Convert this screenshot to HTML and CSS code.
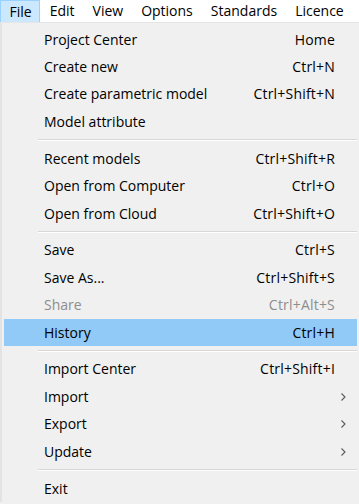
FILE: index.html
```html
<!DOCTYPE html>
<html lang="en">
<head>
    <meta charset="UTF-8">
    <title>File menu</title>
    <link rel="stylesheet" href="styles.css">
</head>
<body>
<div class="menubar">
    <span class="top on">File</span>
    <span class="top">Edit</span>
    <span class="top">View</span>
    <span class="top">Options</span>
    <span class="top">Standards</span>
    <span class="top">Licence</span>
</div>
<div class="drop">
    <div class="item"><span class="label">Project Center</span><span class="key">Home</span><span class="sub"></span></div>
    <div class="item"><span class="label">Create new</span><span class="key">Ctrl+N</span><span class="sub"></span></div>
    <div class="item"><span class="label">Create parametric model</span><span class="key">Ctrl+Shift+N</span><span class="sub"></span></div>
    <div class="item"><span class="label">Model attribute</span><span class="key"></span><span class="sub"></span></div>
    <div class="sep"></div>
    <div class="item"><span class="label">Recent models</span><span class="key">Ctrl+Shift+R</span><span class="sub"></span></div>
    <div class="item"><span class="label">Open from Computer</span><span class="key">Ctrl+O</span><span class="sub"></span></div>
    <div class="item"><span class="label">Open from Cloud</span><span class="key">Ctrl+Shift+O</span><span class="sub"></span></div>
    <div class="sep"></div>
    <div class="item"><span class="label">Save</span><span class="key">Ctrl+S</span><span class="sub"></span></div>
    <div class="item"><span class="label">Save As...</span><span class="key">Ctrl+Shift+S</span><span class="sub"></span></div>
    <div class="item off"><span class="label">Share</span><span class="key">Ctrl+Alt+S</span><span class="sub"></span></div>
    <div class="item hover"><span class="label">History</span><span class="key">Ctrl+H</span><span class="sub"></span></div>
    <div class="sep"></div>
    <div class="item"><span class="label">Import Center</span><span class="key">Ctrl+Shift+I</span><span class="sub"></span></div>
    <div class="item"><span class="label">Import</span><span class="key"></span><span class="sub"><svg width="5" height="8" viewBox="0 0 5 8"><path d="M0.5 0.5 L4 4 L0.5 7.5" fill="none" stroke="#5a5a5a" stroke-width="1.1"/></svg></span></div>
    <div class="item"><span class="label">Export</span><span class="key"></span><span class="sub"><svg width="5" height="8" viewBox="0 0 5 8"><path d="M0.5 0.5 L4 4 L0.5 7.5" fill="none" stroke="#5a5a5a" stroke-width="1.1"/></svg></span></div>
    <div class="item"><span class="label">Update</span><span class="key"></span><span class="sub"><svg width="5" height="8" viewBox="0 0 5 8"><path d="M0.5 0.5 L4 4 L0.5 7.5" fill="none" stroke="#5a5a5a" stroke-width="1.1"/></svg></span></div>
    <div class="sep"></div>
    <div class="item"><span class="label">Exit</span><span class="key"></span><span class="sub"></span></div>
</div>
</body>
</html>
```

FILE: styles.css
```css
html,body{margin:0;padding:0;}
body{background:#f0f0f0;font:14px/1 "Open Sans","Noto Sans",sans-serif;color:#000;width:359px;height:504px;overflow:hidden;}
.menubar{display:flex;height:22px;background:#fff;border-bottom:1px solid #e5e5e5;}
.menubar .top{display:flex;align-items:center;padding:0 8.5px;margin-right:1px;height:22px;box-sizing:border-box;}
.menubar .on{background:#cce8ff;border:1px solid #99d1ff;border-bottom:0;padding:0 7.5px 0 8.5px;}
.drop{border-left:2px solid #e3e3e3;padding:3px 2px 0 2px;}
.item{display:flex;align-items:center;height:27.4px;padding-left:40px;}
.item .label{flex:1;}
.item .key{text-align:right;letter-spacing:0.2px;}
.item .sub{width:22px;display:flex;align-items:center;padding-left:6px;box-sizing:border-box;}
.item .sub svg{display:block;}
.off{color:#8d8d8d;}
.hover{background:#91c9f7;}
.sep{height:9.5px;margin-left:34px;display:flex;align-items:center;}
.sep:before{content:"";display:block;width:100%;border-top:1px solid #d7d7d7;border-bottom:1px solid #fff;}
```
